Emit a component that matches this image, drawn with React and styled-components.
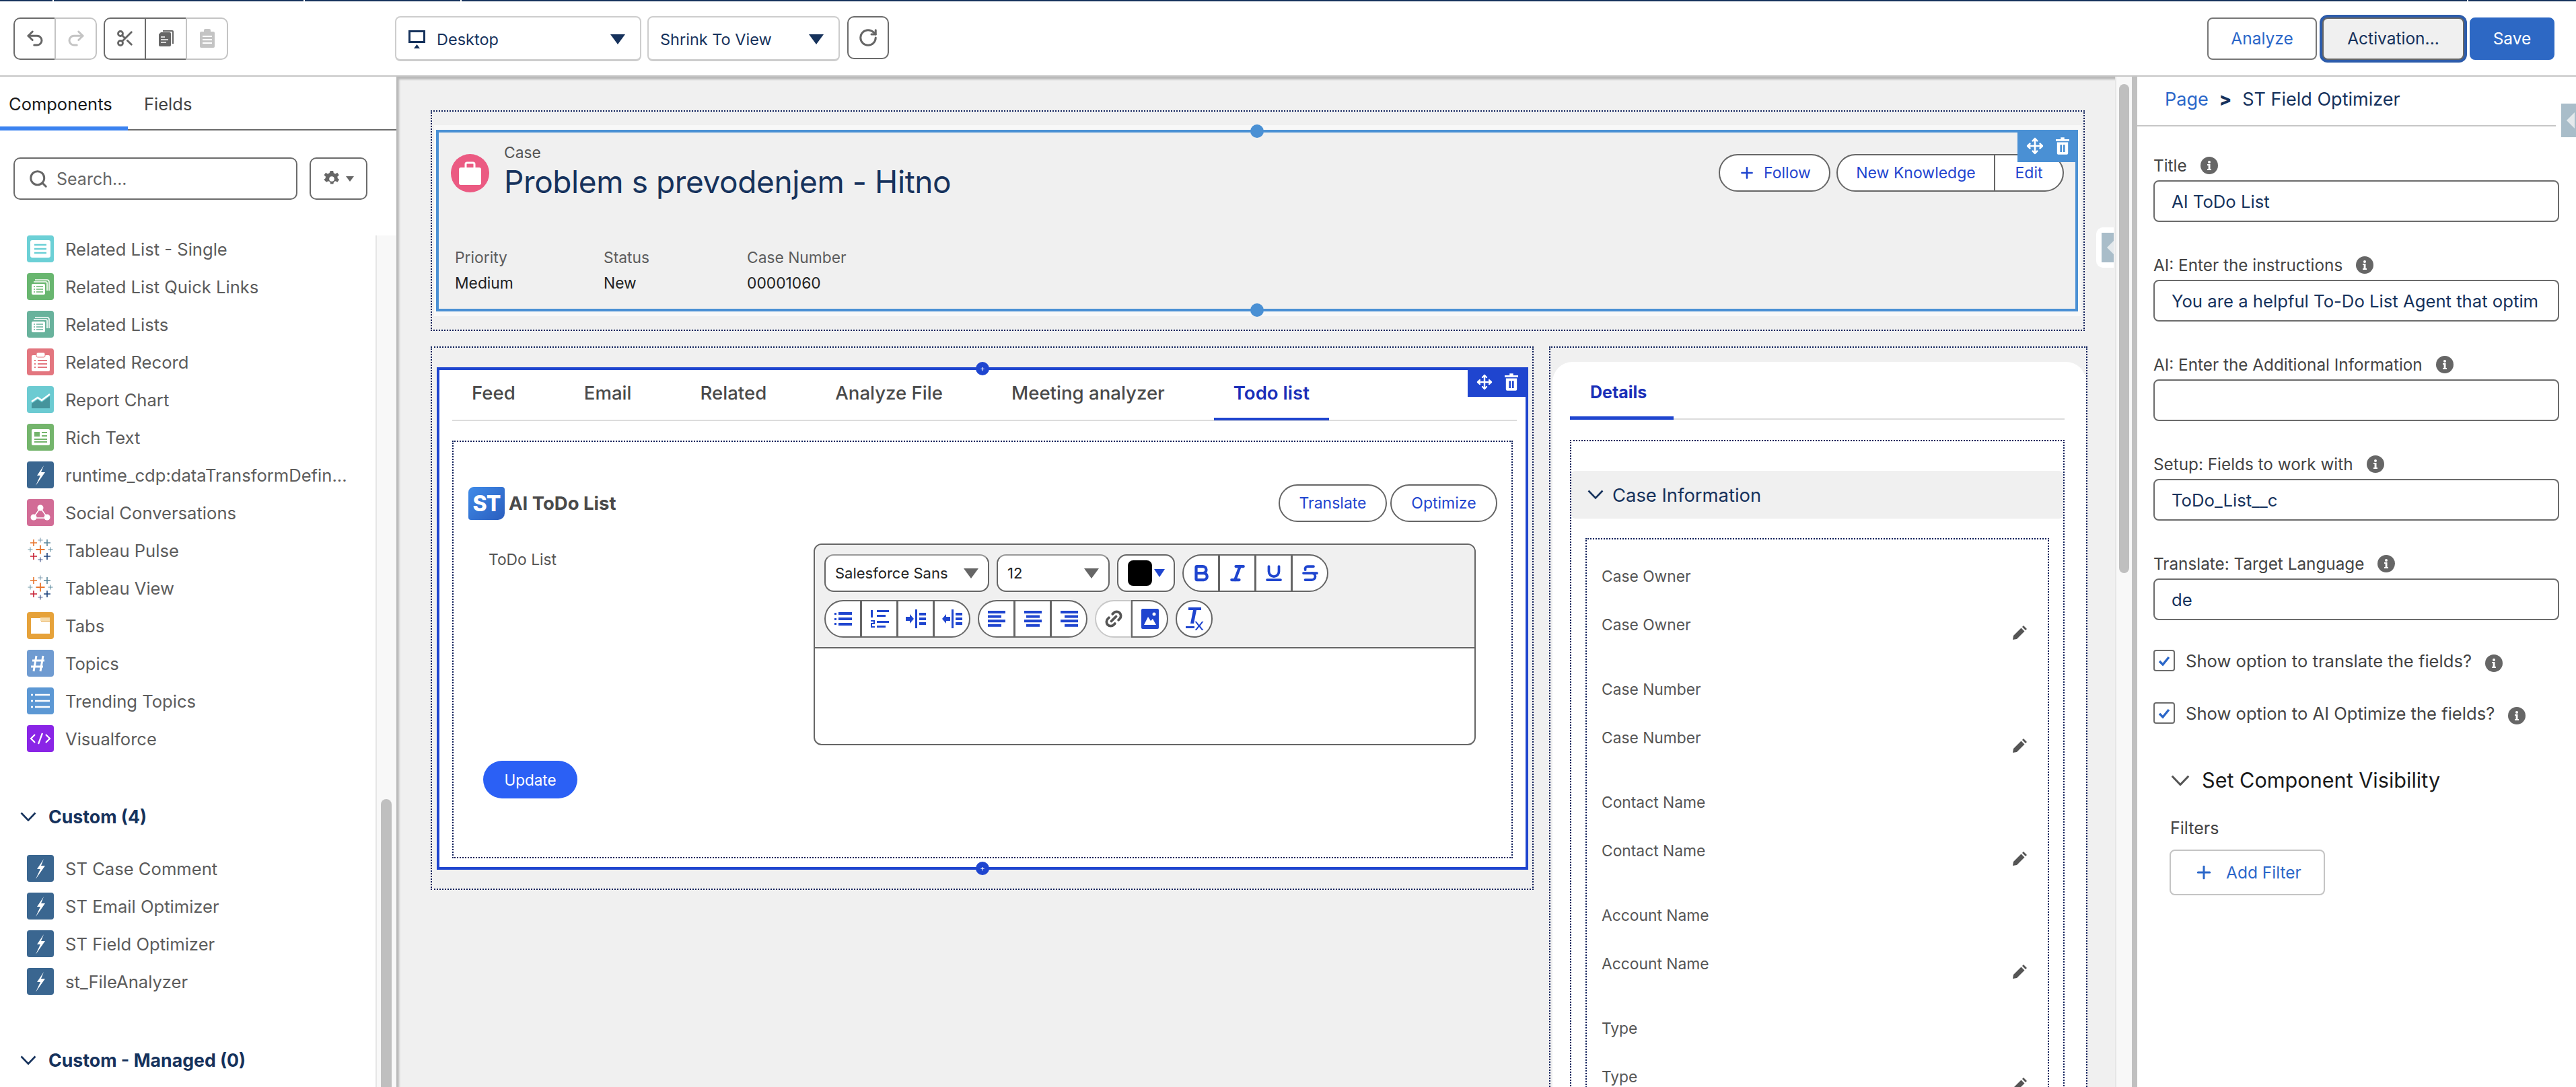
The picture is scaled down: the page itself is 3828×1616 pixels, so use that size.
import React from 'react'
import styled, {createGlobalStyle} from 'styled-components'
import {Undo2, Redo2, Scissors, RotateCw, Search, Plus, Move, Bold, Italic, Underline, Strikethrough, Link2} from 'lucide-react'

const Global = createGlobalStyle`
  html, body { margin: 0; padding: 0; background: #fff; }
  body { width: 3828px; height: 1616px; overflow: hidden; font-family: Inter, "Liberation Sans", sans-serif; }
  * { box-sizing: border-box; }
`

const NAVY = '#16325c'
const RICH = '#1f45cf'
const LINK = '#2b67c9'
const DOTS = '2px dotted #0d1f5a'

const Page = styled.div`
  width: 3828px;
  height: 1616px;
  display: flex;
  flex-direction: column;
  position: relative;
  overflow: hidden;
`
const TopStrip = styled.div`
  height: 2px;
  flex: none;
  display: flex;
  gap: 2px;
`
const StripPart = styled.div`
  height: 2px;
  background: ${NAVY};
  flex: ${p => p.$w ? `0 0 ${p.$w}px` : '1'};
`
const Toolbar = styled.div`
  height: 112px;
  flex: none;
  border-bottom: 2px solid #c6c6c6;
  display: flex;
  align-items: center;
  padding: 0 32px 0 20px;
`
const Group = styled.div`
  display: flex;
  margin-right: ${p => p.$mr || 0}px;
`
const ToolBtn = styled.div`
  width: 63px;
  height: 63px;
  display: flex;
  align-items: center;
  justify-content: center;
  background: #fff;
  border: 2px solid ${p => p.$off ? '#c4c4c4' : '#6b6b6b'};
  color: ${p => p.$off ? '#c4c4c4' : '#666'};
  margin-left: -2px;
  &:first-child { border-radius: 10px 0 0 10px; margin-left: 0; }
  &:last-child { border-radius: 0 10px 10px 0; }
`
const Dropdown = styled.div`
  height: 67px;
  width: ${p => p.$w}px;
  margin-right: ${p => p.$mr}px;
  border: 2px solid #cdcdcd;
  border-bottom-width: 3px;
  border-radius: 8px;
  display: flex;
  align-items: center;
  padding: 3px 22px 0 ${p => p.$pl}px;
  gap: 17px;
  color: ${NAVY};
  font-size: 23.500px;
`
const Caret = styled.span`
  margin-left: auto;
  flex: none;
  width: 0;
  height: 0;
  border-left: 11px solid transparent;
  border-right: 11px solid transparent;
  border-top: 15px solid ${p => p.$color || NAVY};
`
const RefreshBtn = styled.div`
  width: 62px;
  height: 64px;
  margin-top: -3px;
  border: 2px solid #6b6b6b;
  border-radius: 10px;
  color: #666;
  display: flex;
  align-items: center;
  justify-content: center;
`
const RightActions = styled.div`
  margin-left: auto;
  display: flex;
  align-items: center;
  gap: 8px;
`
const ActionBtn = styled.div`
  height: 63px;
  width: ${p => p.$w}px;
  border-radius: 8px;
  border: 2px solid ${p => p.$primary ? '#2d68c4' : p.$focus ? '#666' : '#767676'};
  background: ${p => p.$primary ? '#2d68c4' : p.$focus ? '#f0f0f0' : '#fff'};
  color: ${p => p.$primary ? '#fff' : p.$focus ? NAVY : LINK};
  box-shadow: ${p => p.$focus ? '0 0 0 4px #2d5cab' : 'none'};
  font-size: 24.500px;
  display: flex;
  align-items: center;
  justify-content: center;
`
const Workspace = styled.div`
  flex: 1;
  display: flex;
  min-height: 0;
`
const LeftPanel = styled.aside`
  width: 589px;
  flex: none;
  display: flex;
  flex-direction: column;
  overflow: hidden;
`
const PanelTabs = styled.div`
  height: 80px;
  flex: none;
  display: flex;
  border-bottom: 2px solid #6b6b6b;
`
const PanelTab = styled.div`
  height: 80px;
  width: ${p => p.$w}px;
  padding: 24px 0 0 ${p => p.$pl}px;
  font-size: 25.500px;
  line-height: 34px;
  color: ${p => p.$active ? '#1a1a1a' : '#444'};
  border-bottom: ${p => p.$active ? '6px solid #3b82f0' : 'none'};
`
const SearchRow = styled.div`
  margin-top: 40px;
  padding-left: 20px;
  display: flex;
  gap: 18px;
  flex: none;
`
const SearchBox = styled.div`
  width: 422px;
  height: 63px;
  border: 2px solid #6b6b6b;
  border-radius: 10px;
  display: flex;
  align-items: center;
  padding-left: 20px;
  gap: 12px;
  color: #666;
  font-size: 25px;
`
const GearBtn = styled.div`
  width: 86px;
  height: 63px;
  border: 2px solid #6b6b6b;
  border-radius: 10px;
  display: flex;
  align-items: center;
  justify-content: center;
  gap: 8px;
  color: #666;
`
const SmallCaret = styled.span`
  width: 0;
  height: 0;
  border-left: 6px solid transparent;
  border-right: 6px solid transparent;
  border-top: 8px solid #666;
`
const ListArea = styled.div`
  flex: 1;
  display: flex;
  margin-top: 53px;
  min-height: 0;
`
const ListScroll = styled.div`
  flex: 1;
  padding-left: 30px;
`
const Items = styled.div`
  display: flex;
  flex-direction: column;
  gap: 16px;
  padding-left: 10px;
`
const Item = styled.div`
  height: 40px;
  display: flex;
  align-items: center;
  gap: 17px;
  font-size: 25.600px;
  color: #5c5c5c;
  white-space: nowrap;
`
const Tile = styled.div`
  width: 40px;
  height: 40px;
  flex: none;
  border-radius: 4px;
  background: ${p => p.$bg};
  display: flex;
`
const SectionHead = styled.div`
  height: 32px;
  margin-top: ${p => p.$mt}px;
  margin-bottom: ${p => p.$mb || 0}px;
  display: flex;
  align-items: center;
  gap: 18px;
  font-size: 26.700px;
  font-weight: 700;
  color: ${NAVY};
`
const Track = styled.div`
  width: 31px;
  flex: none;
  background: #f8f8f8;
  border-left: 2px solid #e6e6e6;
  padding: 838px 0 0 6px;
`
const Thumb = styled.div`
  width: 16px;
  height: 500px;
  border-radius: 8px;
  background: #bfbfbf;
`
const Canvas = styled.main`
  width: 2554px;
  flex: none;
  position: relative;
  background: #f0f0f0;
  box-shadow: inset 6px 6px 3px -2px #b8b8b8;
  padding: 50px 0 0 51px;
  overflow: hidden;
`
const CanvasTrack = styled.div`
  width: 33px;
  flex: none;
  background: #f8f8f8;
  border-right: 8px solid #c0c0c0;
  border-left: 2px solid #e6e6e6;
  padding: 11px 0 0 4px;
`
const CanvasThumb = styled.div`
  width: 15px;
  height: 727px;
  border-radius: 8px;
  background: #bfbfbf;
`
const HeaderRegion = styled.section`
  width: 2458px;
  height: 328px;
  border: ${DOTS};
  padding: 20px 3px 20px 3px;
`
const HeaderBand = styled.div`
  background: #f8f8f8;
  height: 284px;
  padding: 7px 5px 7px 3px;
`
const HeaderBox = styled.div`
  position: relative;
  height: 270px;
  border: 4px solid #4a90d4;
  background: #f0f0f0;
  padding: 15px 17px 0 18px;
`
const Handle = styled.span`
  position: absolute;
  left: 50%;
  ${p => p.$bottom ? 'bottom: -12px;' : 'top: -12px;'}
  margin-left: -10px;
  width: 20px;
  height: 20px;
  border-radius: 50%;
  background: ${p => p.$color};
  color: #fff;
  font-size: 11px;
  line-height: 20px;
  text-align: center;
`
const HoverBar = styled.div`
  position: absolute;
  top: -4px;
  right: ${p => p.$r}px;
  width: ${p => p.$w}px;
  height: ${p => p.$h}px;
  background: ${p => p.$color};
  display: flex;
  align-items: center;
  justify-content: center;
  gap: 18px;
  color: #fff;
`
const HeaderTop = styled.div`
  display: flex;
`
const RecordIcon = styled.div`
  width: 57px;
  height: 57px;
  margin-top: 17px;
  flex: none;
  border-radius: 50%;
  background: #eb5a82;
  display: flex;
`
const RecordTitle = styled.div`
  margin-left: 22px;
`
const RecordType = styled.div`
  font-size: 22.800px;
  line-height: 30px;
  color: #555;
`
const RecordName = styled.div`
  font-size: 46px;
  letter-spacing: -0.400px;
  line-height: 60px;
  margin-top: -2px;
  color: ${NAVY};
  white-space: nowrap;
`
const HeaderBtns = styled.div`
  margin-left: auto;
  margin-top: 17px;
  display: flex;
  gap: 9px;
`
const Pills = styled.div`
  display: flex;
`
const Pill = styled.div`
  height: 56px;
  width: ${p => p.$w}px;
  display: flex;
  align-items: center;
  justify-content: center;
  gap: 12px;
  background: #fff;
  border: 2px solid #666;
  margin-left: -2px;
  color: ${RICH};
  font-size: 23px;
  white-space: nowrap;
  &:first-child { border-radius: 28px 0 0 28px; margin-left: 0; }
  &:last-child { border-radius: 0 28px 28px 0; }
  &:only-child { border-radius: 28px; }
`
const Highlights = styled.div`
  display: grid;
  grid-template-columns: 221px 213px auto;
  row-gap: 8px;
  margin: 68px 0 0 6px;
  font-size: 22.800px;
  line-height: 30px;
`
const HighLabel = styled.div`
  color: #5c5c5c;
`
const HighValue = styled.div`
  color: #222;
`
const Columns = styled.div`
  display: flex;
  gap: 23px;
  align-items: flex-start;
  margin-top: 23px;
`
const MainColumn = styled.section`
  width: 1639px;
  flex: none;
  border: ${DOTS};
  padding: 29px 6px 28px 7px;
`
const MainBox = styled.div`
  position: relative;
  height: 747px;
  border: 4px solid ${RICH};
  background: #fff;
`
const TabRow = styled.div`
  display: flex;
  gap: 44px;
  height: 76px;
  margin: 0 13px 0 19px;
  border-bottom: 2px solid #dcdcdc;
`
const Tab = styled.div`
  height: 75px;
  padding: 0 29px 3px;
  display: flex;
  align-items: center;
  font-size: 27.600px;
  font-weight: ${p => p.$active ? 600 : 500};
  color: ${p => p.$active ? '#1a2fb8' : '#4a4a4a'};
  border-bottom: ${p => p.$active ? `4px solid ${RICH}` : '4px solid transparent'};
  white-space: nowrap;
`
const Widget = styled.div`
  height: 621px;
  margin: 29px 19px 0 19px;
  border: ${DOTS};
  padding: 63px 21px 0 22px;
`
const WidgetHead = styled.div`
  display: flex;
  align-items: center;
  height: 56px;
`
const Logo = styled.div`
  width: 54px;
  height: 49px;
  border-radius: 8px 4px 10px 4px;
  background: linear-gradient(135deg, #3f8be8, #2a5dbe);
  color: #fff;
  font-size: 32px;
  font-weight: 800;
  letter-spacing: -1px;
  display: flex;
  align-items: center;
  justify-content: center;
  margin-right: 6px;
`
const WidgetTitle = styled.div`
  font-size: 27.500px;
  font-weight: 700;
  color: #4a4a4a;
`
const WidgetBtns = styled.div`
  margin-left: auto;
  display: flex;
  gap: 5px;
`
const WidgetBody = styled.div`
  display: flex;
  margin-top: 32px;
  padding-left: 30px;
`
const FieldName = styled.div`
  width: 483px;
  flex: none;
  margin-top: 9px;
  font-size: 22.800px;
  line-height: 30px;
  color: #555;
`
const Editor = styled.div`
  width: 984px;
  height: 300px;
  border: 2px solid #666;
  border-radius: 12px;
  overflow: hidden;
  background: #fff;
`
const EditorBar = styled.div`
  height: 154px;
  background: #f0f0f0;
  border-bottom: 2px solid #666;
  padding: 14px 14px 0;
  display: flex;
  flex-direction: column;
  gap: 12px;
`
const BarRow = styled.div`
  display: flex;
  gap: 11px;
`
const EditSelect = styled.div`
  width: ${p => p.$w}px;
  height: 56px;
  background: #fff;
  border: 2px solid #666;
  border-top-color: #999;
  border-radius: 14px;
  padding: 0 14px;
  display: flex;
  align-items: center;
  font-size: 22px;
  color: #222;
`
const Swatch = styled.span`
  width: 36px;
  height: 38px;
  border-radius: 8px;
  background: #000;
  margin-right: 3px;
  flex: none;
`
const ColorBtn = styled.div`
  width: 86px;
  height: 56px;
  background: #fff;
  border: 2px solid #666;
  border-radius: 14px;
  display: flex;
  align-items: center;
  padding: 0 8px 0 14px;
`
const SwatchCaret = styled.span`
  width: 0;
  height: 0;
  border-left: 8px solid transparent;
  border-right: 8px solid transparent;
  border-top: 12px solid ${RICH};
`
const RichBtn = styled.div`
  width: 55px;
  height: 56px;
  display: flex;
  align-items: center;
  justify-content: center;
  background: #fff;
  border: 2px solid ${p => p.$off ? '#c8c8c8' : '#666'};
  margin-left: -1px;
  color: ${p => p.$off ? '#555' : RICH};
  &:first-child { border-radius: 28px 0 0 28px; margin-left: 0; }
  &:last-child { border-radius: 0 28px 28px 0; }
  &:only-child { border-radius: 28px; }
`
const UpdateBtn = styled.div`
  width: 140px;
  height: 56px;
  margin: 23px 0 0 22px;
  border-radius: 28px;
  background: #2b60f5;
  color: #fff;
  font-size: 22.500px;
  display: flex;
  align-items: center;
  justify-content: center;
`
const DetailColumn = styled.section`
  width: 800px;
  flex: none;
  height: 1200px;
  border: ${DOTS};
  padding: 21px 0 0 3px;
`
const DetailCard = styled.div`
  width: 793px;
  height: 1200px;
  background: #fff;
  border-radius: 30px 30px 0 0;
  padding: 0 32px 0 26px;
`
const DetailTabs = styled.div`
  height: 86px;
  display: flex;
  border-bottom: 2px solid #dcdcdc;
`
const DetailTab = styled.div`
  width: 154px;
  height: 86px;
  padding: 29px 0 0 30px;
  font-size: 25px;
  line-height: 32px;
  font-weight: 700;
  color: #1a2fb8;
  border-bottom: 5px solid ${RICH};
`
const DetailBody = styled.div`
  height: 1200px;
  margin-top: 30px;
  border: ${DOTS};
  padding: 44px 0 0 0;
`
const SectionBar = styled.div`
  height: 71px;
  background: #f0f0f0;
  border-radius: 6px;
  display: flex;
  align-items: center;
  padding-left: 24px;
  gap: 13px;
  font-size: 27.400px;
  color: ${NAVY};
`
const FieldBox = styled.div`
  margin: 29px 21px 0;
  height: 1200px;
  border: ${DOTS};
  padding: 40px 29px 0 22px;
`
const Field = styled.div`
  height: 168px;
`
const FieldLine = styled.div`
  height: 30px;
  margin-bottom: 42px;
  font-size: 22.800px;
  line-height: 30px;
  color: #555;
  display: flex;
  justify-content: space-between;
`
const PencilMark = styled.svg`
  width: 24px;
  height: 24px;
  margin-top: 14px;
  fill: #555;
`
const CollapseTab = styled.div`
  position: absolute;
  top: ${p => p.$top}px;
  ${p => p.$right ? `right: ${p.$right}px;` : 'right: 0;'}
  width: ${p => p.$w}px;
  height: ${p => p.$h}px;
  background: #fff;
  border-radius: 10px 0 0 10px;
  padding: 8px 0 8px 8px;
`
const CollapseInner = styled.div`
  height: 100%;
  background: #a9bdc9;
  display: flex;
  align-items: center;
  overflow: hidden;
`
const CollapseArrow = styled.span`
  width: 0;
  height: 0;
  border-top: 12px solid transparent;
  border-bottom: 12px solid transparent;
  border-right: 12px solid #e4e9ec;
  margin-left: 8px;
`
const Props = styled.aside`
  width: 652px;
  flex: none;
  background: #fff;
`
const Crumbs = styled.div`
  height: 74px;
  border-bottom: 2px solid #c6c6c6;
  padding: 0 0 6px 41px;
  display: flex;
  align-items: center;
  font-size: 27px;
  color: ${NAVY};
`
const CrumbLink = styled.span`
  color: ${LINK};
`
const CrumbSep = styled.span`
  margin: 0 16px;
  font-weight: 800;
`
const Form = styled.div`
  padding: 43px 25px 0 24px;
`
const FormField = styled.div`
  & + & { margin-top: 49px; }
`
const FormLabel = styled.div`
  height: 30px;
  display: flex;
  align-items: center;
  gap: 20px;
  margin-bottom: 7px;
  font-size: 24.300px;
  color: #444;
`
const Input = styled.div`
  height: 62px;
  border: 2px solid #6b6b6b;
  border-radius: 8px;
  padding: 0 0 0 25px;
  display: flex;
  align-items: center;
  font-size: 25.700px;
  color: ${NAVY};
  white-space: nowrap;
  overflow: hidden;
`
const CheckRow = styled.div`
  height: 32px;
  display: flex;
  align-items: center;
  margin-top: ${p => p.$mt}px;
  font-size: 25.600px;
  color: #444;
`
const CheckBox = styled.div`
  width: 32px;
  height: 32px;
  margin-right: 16px;
  border: 2px solid #6b6b6b;
  border-radius: 4px;
  color: ${LINK};
  display: flex;
  align-items: center;
  justify-content: center;
`
const InfoWrap = styled.span`
  display: flex;
  margin: 8px 0 0 20px;
`
const Visibility = styled.div`
  margin: 66px 0 0 26px;
  display: flex;
  align-items: center;
  gap: 18px;
  font-size: 30.600px;
  line-height: 36px;
  color: #1a1a1a;
`
const FilterLabel = styled.div`
  margin: 38px 0 0 25px;
  font-size: 25px;
  line-height: 30px;
  color: #444;
`
const AddFilter = styled.div`
  width: 231px;
  height: 68px;
  margin: 17px 0 0 24px;
  border: 2px solid #c4c4c4;
  border-radius: 8px;
  display: flex;
  align-items: center;
  padding-left: 34px;
  gap: 18px;
  font-size: 24.500px;
  color: ${LINK};
`

function Info () {
  return <svg width="26" height="26" viewBox="0 0 26 26">
    <circle cx="13" cy="13" r="13" fill="#666"/>
    <circle cx="13" cy="8" r="2" fill="#fff"/>
    <path d="M10 11h4.500v7H16v2h-6v-2h1.600v-5H10z" fill="#fff"/>
  </svg>
}

function Chevron ({w = 24, color = 'currentColor'}) {
  return <svg width={w} height={w * 0.6} viewBox="0 0 24 14.400" style={{flex: 'none'}}>
    <path d="M1.500 1.500L12 12.500 22.500 1.500" fill="none" stroke={color} strokeWidth="2.600"/>
  </svg>
}

function Glyph ({children}) {
  return <svg width="40" height="40" viewBox="0 0 40 40">{children}</svg>
}

const bolt = <path d="M25 6 L15 21 L20 21 L13 36 L27 16 L21 16 Z" fill="#fff"/>
const stacked = color => <g>
  <path d="M12 10h18a3 3 0 0 1 3 3v13" fill="none" stroke="#fff" strokeWidth="1.600"/>
  <path d="M10 13h18a2 2 0 0 1 2 2v11" fill="none" stroke="#fff" strokeWidth="1.600"/>
  <rect x="7" y="16" width="20" height="16" rx="2" fill="#fff"/>
  <path d="M10 20h2M14 20h10M10 24h2M14 24h10M10 28h2M14 28h10" stroke={color} strokeWidth="1.600"/>
</g>

function TableauMark () {
  const crosses = [
    [20, 5, 3.5, '#7a99ac', 1], [10, 9, 5, '#e8762d', 1.6], [30, 9, 5, '#5b879b', 1.6],
    [5, 19, 3.5, '#7099a6', 1], [20, 19, 6.5, '#e8762d', 1.8], [35, 19, 3.5, '#59879b', 1],
    [10, 29, 5, '#c72035', 1.6], [30, 29, 5, '#1f447e', 1.6], [20, 34, 3.5, '#4e5f91', 1.2]
  ]
  return <Glyph>
    {crosses.map(([x, y, r, c, w], i) => <path key={i} d={`M${x - r} ${y}h${r * 2}M${x} ${y - r}v${r * 2}`} stroke={c} strokeWidth={w}/>)}
  </Glyph>
}

const coreItems = [
  {name: 'Related List - Single', bg: '#6cd0d6', glyph: <g><rect x="5" y="7" width="30" height="26" rx="3" fill="#fff"/><path d="M11 14h18M11 20h18M11 26h18" stroke="#6cd0d6" strokeWidth="2.600"/></g>},
  {name: 'Related List Quick Links', bg: '#68b66f', glyph: stacked('#68b66f')},
  {name: 'Related Lists', bg: '#68b29c', glyph: stacked('#68b29c')},
  {name: 'Related Record', bg: '#e3767f', glyph: <g><rect x="7" y="10" width="27" height="24" rx="2" fill="#fff"/><rect x="14" y="6" width="13" height="7" rx="2" fill="#fff" stroke="#e3767f"/><path d="M11 18h2M16 18h14M11 23h2M16 23h14M11 28h2M16 28h14" stroke="#e3767f" strokeWidth="2"/></g>},
  {name: 'Report Chart', bg: '#6ccbd2', glyph: <g><path d="M7 33V26l9-6 6 4 12-9v18z" fill="#45949c"/><path d="M7 23l9-6 6 4 12-9" fill="none" stroke="#fff" strokeWidth="2.400"/></g>},
  {name: 'Rich Text', bg: '#74b56c', glyph: <g><rect x="7" y="8" width="27" height="24" rx="2" fill="#fff"/><rect x="11" y="12" width="8" height="7" fill="#74b56c"/><path d="M22 13h8M22 18h8M11 23h19M11 27h19" stroke="#74b56c" strokeWidth="1.800"/></g>},
  {name: 'runtime_cdp:dataTransformDefin...', bg: '#3a6690', glyph: bolt},
  {name: 'Social Conversations', bg: '#d26c96', glyph: <g><circle cx="20" cy="13" r="4.500" fill="#fff"/><circle cx="10" cy="27" r="4.500" fill="#fff"/><circle cx="30" cy="27" r="4.500" fill="#fff"/><path d="M20 13L10 27M20 13l10 14M14 28h12" stroke="#fff" strokeWidth="1.600"/></g>},
  {name: 'Tableau Pulse', tableau: true},
  {name: 'Tableau View', tableau: true},
  {name: 'Tabs', bg: '#e6a23a', glyph: <g><path d="M6 9h15v5h13v18H6z" fill="#fff"/><rect x="20" y="8" width="14" height="5" fill="#f6dcae"/></g>},
  {name: 'Topics', bg: '#6f9bd1', glyph: <path d="M17 9l-4 23M27 9l-4 23M11 16h18M9 25h18" stroke="#fff" strokeWidth="3" transform="translate(-3 0)"/>},
  {name: 'Trending Topics', bg: '#5c98d4', glyph: <path d="M6 11h3M12 11h22M6 20h3M12 20h22M6 29h3M12 29h22" stroke="#fff" strokeWidth="2.400"/>},
  {name: 'Visualforce', bg: '#8a25e6', glyph: <path d="M12 14l-6 6 6 6M28 14l6 6-6 6M23 12l-6 16" fill="none" stroke="#fff" strokeWidth="2.200"/>}
]

const customItems = ['ST Case Comment', 'ST Email Optimizer', 'ST Field Optimizer', 'st_FileAnalyzer']
const mainTabs = ['Feed', 'Email', 'Related', 'Analyze File', 'Meeting analyzer', 'Todo list']
const detailFields = ['Case Owner', 'Case Number', 'Contact Name', 'Account Name', 'Type']

function Monitor () {
  return <svg width="25" height="27" viewBox="0 0 25 27" fill={NAVY}>
    <path d="M0 0h25v19H0zM3 3v13h19V3z" fillRule="evenodd"/>
    <path d="M12.500 21l4.500 6H8z"/>
  </svg>
}
function CopyFilled () {
  return <svg width="24" height="26" viewBox="0 0 24 26">
    <path d="M7 1h14a2 2 0 0 1 2 2v18h-2V3H7z" fill="#666"/>
    <path d="M4 4h13a2 2 0 0 1 2 2v17a2 2 0 0 1-2 2H3a2 2 0 0 1-2-2V7z" fill="#666"/>
    <path d="M4 11h6M4 15h11M4 19h8" stroke="#fff" strokeWidth="1.600"/>
  </svg>
}
function PasteFilled () {
  return <svg width="24" height="28" viewBox="0 0 24 28" fill="#c4c4c4">
    <rect x="1" y="4" width="22" height="24" rx="2"/>
    <rect x="7" y="0" width="10" height="6" rx="2"/>
    <path d="M5 11h14M5 16h14M5 21h14" stroke="#fff" strokeWidth="2"/>
  </svg>
}
function Gear () {
  return <svg width="26" height="30" viewBox="0 0 24 24" fill="#666">
    <path fillRule="evenodd" d="M10 1h4l.6 3 2.400 1 2.600-1.600 2.400 3.400-2.200 2 .2 2.200 2.200 2-2.400 3.400-2.600-1.400-2.400 1-.6 3h-4l-.6-3-2.400-1-2.600 1.400L1.200 13l2.200-2 .2-2.200-2.200-2L3.800 3.400 6.400 5l2.400-1zM12 8.500a3.500 3.500 0 1 0 0 7 3.500 3.500 0 0 0 0-7z"/>
  </svg>
}
function TrashFilled ({size = 22}) {
  return <svg width={size} height={size + 6} viewBox="0 0 22 28" fill="#fff">
    <path d="M8 0h6v3h8v3H0V3h8z"/>
    <path d="M2 8h18v18a2 2 0 0 1-2 2H4a2 2 0 0 1-2-2zM7 12v12h3V12zM12 12v12h3V12z" fillRule="evenodd"/>
  </svg>
}
function CaseIcon () {
  return <svg width="57" height="57" viewBox="0 0 57 57">
    <rect x="12" y="20" width="33" height="26" rx="3" fill="#fff"/>
    <path d="M22 20v-5a2 2 0 0 1 2-2h9a2 2 0 0 1 2 2v5" fill="none" stroke="#fff" strokeWidth="3"/>
  </svg>
}
function Pencil () {
  return <PencilMark viewBox="0 0 24 24">
    <path d="M17 2l5 5-2 2-5-5zM13.500 5.500l5 5L7 22l-6 1 1-6z"/>
  </PencilMark>
}
function ListIcon ({type}) {
  const blue = {fill: RICH}
  if (type === 'bullets') {
    return <svg width="26" height="22" viewBox="0 0 26 22" {...blue}>
      <rect x="0" y="2" width="3" height="3"/><rect x="0" y="10" width="3" height="3"/><rect x="0" y="17" width="3" height="3"/>
      <rect x="6" y="1" width="20" height="4"/><rect x="6" y="9" width="20" height="4"/><rect x="6" y="17" width="20" height="4"/>
    </svg>
  }
  if (type === 'numbers') {
    return <svg width="28" height="28" viewBox="0 0 28 28" {...blue}>
      <rect x="1" y="1" width="3" height="11"/><rect x="1" y="16" width="6" height="2"/><rect x="5" y="16" width="2" height="5"/><rect x="1" y="20" width="6" height="2"/><rect x="1" y="20" width="2" height="6"/><rect x="1" y="25" width="6" height="2"/>
      <rect x="10" y="1" width="18" height="3"/><rect x="10" y="8" width="13" height="3"/><rect x="10" y="17" width="18" height="3"/><rect x="10" y="24" width="13" height="3"/>
    </svg>
  }
  if (type === 'indent' || type === 'outdent') {
    const arrow = type === 'indent' ? 'M0 11h6V7l6 7-6 7v-4H0z' : 'M12 11H6V7l-6 7 6 7v-4h6z'
    return <svg width="30" height="30" viewBox="0 0 30 30" {...blue}>
      <path d={arrow} transform="translate(0 1)"/>
      <rect x="14" y="1" width="3" height="28"/>
      <rect x="20" y="6" width="10" height="4"/><rect x="20" y="13" width="10" height="4"/><rect x="20" y="20" width="10" height="4"/>
    </svg>
  }
  const widths = [26, 20, 26, 20]
  const place = w => type === 'left' ? 0 : type === 'center' ? (26 - w) / 2 : 26 - w
  return <svg width="26" height="26" viewBox="0 0 26 26" {...blue}>
    {widths.map((w, i) => <rect key={i} x={place(w)} y={1 + i * 6.6} width={w} height="4"/>)}
  </svg>
}
function ImageIcon () {
  return <svg width="26" height="30" viewBox="0 0 26 30">
    <rect width="26" height="30" rx="2" fill={RICH}/>
    <path d="M4 24l6-12 4 6 3-3 5 9z" fill="#fff"/>
    <circle cx="19" cy="8" r="2.500" fill="#fff"/>
  </svg>
}
function ClearIcon () {
  return <svg width="28" height="34" viewBox="0 0 28 34" fill={RICH}>
    <path d="M5 0h19v4h-7l-4 20H8l4-20H5z"/>
    <rect x="1" y="28" width="13" height="3"/>
    <path d="M17 21l4 5 4-5h2.500l-5 6.500 5 6.500H25l-4-5-4 5h-2.500l5-6.500-5-6.500z"/>
  </svg>
}
function CheckMark () {
  return <svg width="20" height="20" viewBox="0 0 20 20">
    <path d="M3 11l5 5 9-11" fill="none" stroke="currentColor" strokeWidth="3.400"/>
  </svg>
}

function ComponentRow ({item}) {
  return <Item>
    {item.tableau
      ? <TableauMark/>
      : <Tile $bg={item.bg}><Glyph>{item.glyph}</Glyph></Tile>}
    <span>{item.name}</span>
  </Item>
}

export default function App () {
  return <Page>
    <Global/>
    <TopStrip>
      <StripPart $w={78}/><StripPart $w={371}/><StripPart $w={231}/><StripPart $w={2980}/><StripPart/>
    </TopStrip>
    <Toolbar>
      <Group $mr={10}>
        <ToolBtn><Undo2 size={30} strokeWidth={2.4}/></ToolBtn>
        <ToolBtn $off><Redo2 size={30} strokeWidth={2.4}/></ToolBtn>
      </Group>
      <Group $mr={248}>
        <ToolBtn><Scissors size={28} strokeWidth={2.4}/></ToolBtn>
        <ToolBtn><CopyFilled/></ToolBtn>
        <ToolBtn $off><PasteFilled/></ToolBtn>
      </Group>
      <Dropdown $w={366} $mr={9} $pl={18}>
        <Monitor/>
        <span>Desktop</span>
        <Caret/>
      </Dropdown>
      <Dropdown $w={286} $mr={11} $pl={17}>
        <span>Shrink To View</span>
        <Caret/>
      </Dropdown>
      <RefreshBtn><RotateCw size={30} strokeWidth={2.4}/></RefreshBtn>
      <RightActions>
        <ActionBtn $w={163}>Analyze</ActionBtn>
        <ActionBtn $w={211} $focus>Activation...</ActionBtn>
        <ActionBtn $w={126} $primary>Save</ActionBtn>
      </RightActions>
    </Toolbar>
    <Workspace>
      <LeftPanel>
        <PanelTabs>
          <PanelTab $w={190} $pl={13} $active>Components</PanelTab>
          <PanelTab $w={150} $pl={24}>Fields</PanelTab>
        </PanelTabs>
        <SearchRow>
          <SearchBox><Search size={30} strokeWidth={2.4}/><span>Search...</span></SearchBox>
          <GearBtn><Gear/><SmallCaret/></GearBtn>
        </SearchRow>
        <ListArea>
          <ListScroll>
            <Items>
              {coreItems.map(item => <ComponentRow key={item.name} item={item}/>)}
            </Items>
            <SectionHead $mt={80} $mb={41}><Chevron/>Custom (4)</SectionHead>
            <Items>
              {customItems.map(name => <ComponentRow key={name} item={{name, bg: '#3a6690', glyph: bolt}}/>)}
            </Items>
            <SectionHead $mt={81}><Chevron/>Custom - Managed (0)</SectionHead>
          </ListScroll>
          <Track><Thumb/></Track>
        </ListArea>
      </LeftPanel>
      <Canvas>
        <HeaderRegion>
          <HeaderBand>
            <HeaderBox>
              <Handle $color="#4a90d4"/>
              <Handle $color="#4a90d4" $bottom/>
              <HoverBar $color="#4a90d4" $r={-4} $w={90} $h={48}><Move size={26} strokeWidth={2.4}/><TrashFilled size={20}/></HoverBar>
              <HeaderTop>
                <RecordIcon><CaseIcon/></RecordIcon>
                <RecordTitle>
                  <RecordType>Case</RecordType>
                  <RecordName>Problem s prevodenjem - Hitno</RecordName>
                </RecordTitle>
                <HeaderBtns>
                  <Pills><Pill $w={166}><Plus size={26} strokeWidth={2.4}/>Follow</Pill></Pills>
                  <Pills>
                    <Pill $w={236}>New Knowledge</Pill>
                    <Pill $w={104}>Edit</Pill>
                  </Pills>
                </HeaderBtns>
              </HeaderTop>
              <Highlights>
                <HighLabel>Priority</HighLabel><HighLabel>Status</HighLabel><HighLabel>Case Number</HighLabel>
                <HighValue>Medium</HighValue><HighValue>New</HighValue><HighValue>00001060</HighValue>
              </Highlights>
            </HeaderBox>
          </HeaderBand>
        </HeaderRegion>
        <Columns>
          <MainColumn>
            <MainBox>
              <Handle $color={RICH}>+</Handle>
              <Handle $color={RICH} $bottom>+</Handle>
              <HoverBar $color={RICH} $r={-2} $w={88} $h={44}><Move size={24} strokeWidth={2.4}/><TrashFilled size={20}/></HoverBar>
              <TabRow>
                {mainTabs.map(t => <Tab key={t} $active={t === 'Todo list'}>{t}</Tab>)}
              </TabRow>
              <Widget>
                <WidgetHead>
                  <Logo>ST</Logo>
                  <WidgetTitle>AI ToDo List</WidgetTitle>
                  <WidgetBtns>
                    <Pills><Pill $w={161}>Translate</Pill></Pills>
                    <Pills><Pill $w={159}>Optimize</Pill></Pills>
                  </WidgetBtns>
                </WidgetHead>
                <WidgetBody>
                  <FieldName>ToDo List</FieldName>
                  <Editor>
                    <EditorBar>
                      <BarRow>
                        <EditSelect $w={245}>Salesforce Sans<Caret $color="#666"/></EditSelect>
                        <EditSelect $w={168}>12<Caret $color="#666"/></EditSelect>
                        <ColorBtn><Swatch/><SwatchCaret/></ColorBtn>
                        <Group>
                          <RichBtn><Bold size={30} strokeWidth={3.4}/></RichBtn>
                          <RichBtn><Italic size={30} strokeWidth={3.4}/></RichBtn>
                          <RichBtn><Underline size={30} strokeWidth={3}/></RichBtn>
                          <RichBtn><Strikethrough size={30} strokeWidth={3}/></RichBtn>
                        </Group>
                      </BarRow>
                      <BarRow>
                        <Group>
                          <RichBtn><ListIcon type="bullets"/></RichBtn>
                          <RichBtn><ListIcon type="numbers"/></RichBtn>
                          <RichBtn><ListIcon type="indent"/></RichBtn>
                          <RichBtn><ListIcon type="outdent"/></RichBtn>
                        </Group>
                        <Group>
                          <RichBtn><ListIcon type="left"/></RichBtn>
                          <RichBtn><ListIcon type="center"/></RichBtn>
                          <RichBtn><ListIcon type="right"/></RichBtn>
                        </Group>
                        <Group>
                          <RichBtn $off><Link2 size={30} strokeWidth={3} transform="rotate(-45)"/></RichBtn>
                          <RichBtn><ImageIcon/></RichBtn>
                        </Group>
                        <Group><RichBtn><ClearIcon/></RichBtn></Group>
                      </BarRow>
                    </EditorBar>
                  </Editor>
                </WidgetBody>
                <UpdateBtn>Update</UpdateBtn>
              </Widget>
            </MainBox>
          </MainColumn>
          <DetailColumn>
            <DetailCard>
              <DetailTabs><DetailTab>Details</DetailTab></DetailTabs>
              <DetailBody>
                <SectionBar><Chevron/>Case Information</SectionBar>
                <FieldBox>
                  {detailFields.map(f => <Field key={f}>
                    <FieldLine>{f}</FieldLine>
                    <FieldLine>{f}<Pencil/></FieldLine>
                  </Field>)}
                </FieldBox>
              </DetailBody>
            </DetailCard>
          </DetailColumn>
        </Columns>
        <CollapseTab $top={224} $right={2} $w={26} $h={60}><CollapseInner><CollapseArrow/></CollapseInner></CollapseTab>
      </Canvas>
      <CanvasTrack><CanvasThumb/></CanvasTrack>
      <Props>
        <Crumbs><CrumbLink>Page</CrumbLink><CrumbSep>&gt;</CrumbSep>ST Field Optimizer</Crumbs>
        <Form>
          <FormField>
            <FormLabel>Title<Info/></FormLabel>
            <Input>AI ToDo List</Input>
          </FormField>
          <FormField>
            <FormLabel>AI: Enter the instructions<Info/></FormLabel>
            <Input>You are a helpful To-Do List Agent that optim</Input>
          </FormField>
          <FormField>
            <FormLabel>AI: Enter the Additional Information<Info/></FormLabel>
            <Input/>
          </FormField>
          <FormField>
            <FormLabel>Setup: Fields to work with<Info/></FormLabel>
            <Input>ToDo_List__c</Input>
          </FormField>
          <FormField>
            <FormLabel>Translate: Target Language<Info/></FormLabel>
            <Input>de</Input>
          </FormField>
          <CheckRow $mt={44}><CheckBox><CheckMark/></CheckBox>Show option to translate the fields?<InfoWrap><Info/></InfoWrap></CheckRow>
          <CheckRow $mt={46}><CheckBox><CheckMark/></CheckBox>Show option to AI Optimize the fields?<InfoWrap><Info/></InfoWrap></CheckRow>
          <Visibility><Chevron w={28} color="#555"/>Set Component Visibility</Visibility>
          <FilterLabel>Filters</FilterLabel>
          <AddFilter><Plus size={30} strokeWidth={2.4}/>Add Filter</AddFilter>
        </Form>
      </Props>
      <CollapseTab $top={146} $w={30} $h={66}><CollapseInner><CollapseArrow/></CollapseInner></CollapseTab>
    </Workspace>
  </Page>
}
